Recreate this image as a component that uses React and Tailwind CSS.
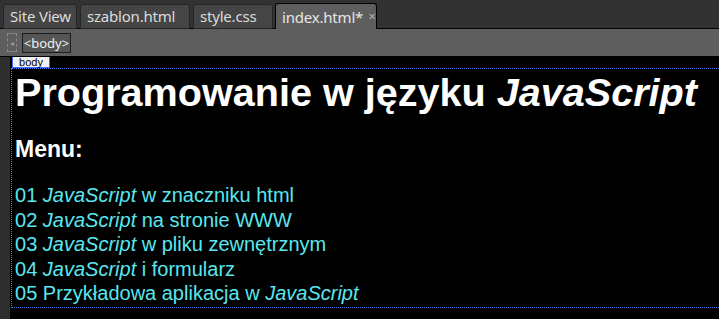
const tabs = [
  { label: "Site View", w: "w-[74px]" },
  { label: "szablon.html", w: "w-[110px]" },
  { label: "style.css", w: "w-[80px]" },
];

const links = [
  [<i key="a">JavaScript</i>, " w znaczniku html"],
  [<i key="a">JavaScript</i>, " na stronie WWW"],
  [<i key="a">JavaScript</i>, " w pliku zewnętrznym"],
  [<i key="a">JavaScript</i>, " i formularz"],
  ["Przykładowa aplikacja w ", <i key="a">JavaScript</i>],
];

const App = () => {
  return (
    <div className="w-[719px] h-[319px] bg-[#323232] flex flex-col overflow-hidden font-['Noto_Sans',sans-serif]">
      {/* tabs */}
      <div className="h-[29px] flex items-end pl-[3px] gap-[6px] border-b border-black">
        {tabs.map((t) => (
          <div
            key={t.label}
            className={`${t.w} h-[25px] -mb-px bg-[#454545] border border-[#262626] rounded-t-[3px] text-[15px] leading-[22px] text-[#dcdcdc] pl-[6px] mr-[-3px] tracking-[-0.2px]`}
          >
            {t.label}
          </div>
        ))}
        <div className="w-[102px] h-[26px] -mb-px ml-[-1px] bg-[#5e5e5e] border border-black border-b-0 rounded-t-[3px] flex items-center pl-[6px] text-[15px] text-[#e6e6e6] tracking-[-0.2px]">
          <span className="leading-[22px]">index.html*</span>
          <span className="ml-[5px] text-[10px] text-[#b0b0b0]">✕</span>
        </div>
      </div>

      {/* toolbar */}
      <div className="h-[28px] bg-[#5e5e5e] flex items-center pl-[7px] gap-[5px] border-b border-black">
        <div className="w-[10px] h-[19px] border border-dashed border-[#8a8a8a] flex items-center justify-center text-[8px] text-[#9a9a9a]">
          ◂
        </div>
        <div className="w-[49px] h-[20px] border border-[#1e1e1e] bg-[#555] text-[13px] leading-[18px] text-[#f0f0f0] text-center">
          &lt;body&gt;
        </div>
      </div>

      {/* document */}
      <div className="flex-1 flex">
        <div className="w-[10px] bg-[#2e2e2e]" />
        <div className="flex-1 bg-black overflow-hidden font-['Liberation_Sans',Arial,sans-serif]">
          <div className="ml-[2px] w-[38px] h-[11px] bg-[#f2f2f2] border-l border-b border-r border-[#3b6cff] text-[11px] leading-[10px] text-black text-center">
            body
          </div>
          <div className="ml-px w-[730px] h-[240px] border border-dotted border-[#4a7cff] pl-[3px]">
            <h1 className="text-[39.6px] leading-[46px] font-bold text-white">
              Programowanie w języku <i>JavaScript</i>
            </h1>
            <h2 className="mt-[22px] text-[23px] leading-[25px] font-bold text-white">Menu:</h2>
            <ul className="mt-[21px] text-[20px] leading-[24.5px] text-[#5ae6ee]">
              {links.map((l, i) => (
                <li key={i}>
                  0{i + 1} {l}
                </li>
              ))}
            </ul>
          </div>
        </div>
      </div>
    </div>
  );
};

export default App;
